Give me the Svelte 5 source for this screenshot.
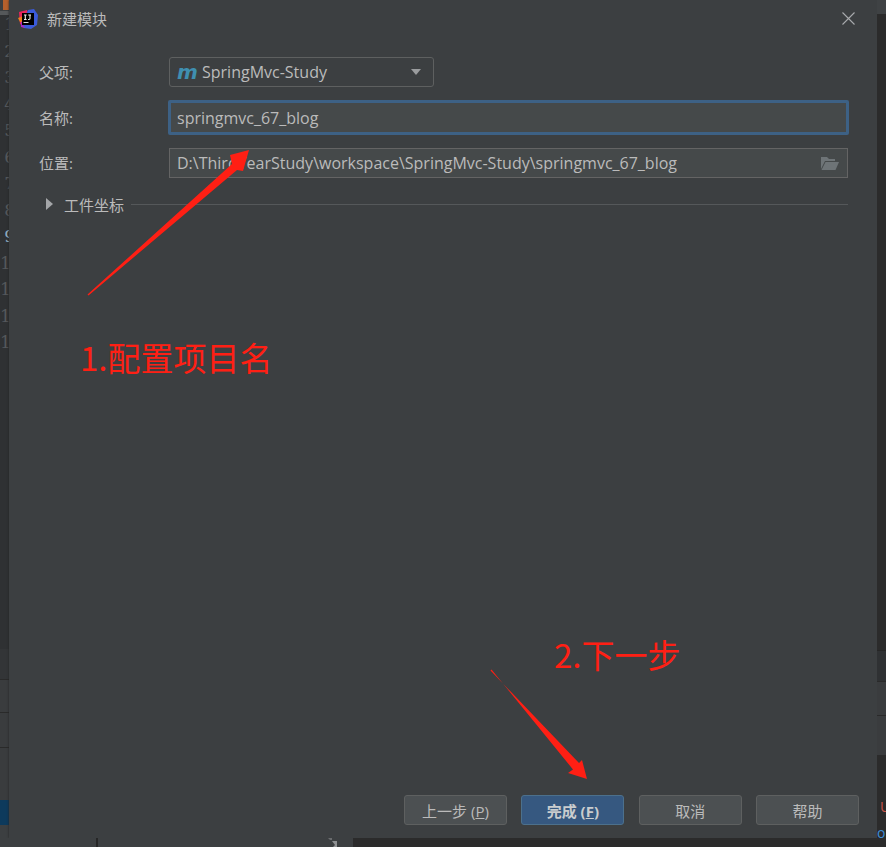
<script lang="ts">
  const lineNumbers = Array.from({ length: 13 }, (_, i) => i + 1);
  const buttons = [
    { label: "上一步", key: "P" },
    { label: "完成", key: "F", primary: true },
    { label: "取消" },
    { label: "帮助" },
  ];
</script>

<div class="screen">
  <div class="main">
    <div class="gutter">
      <div class="tab"><span class="tab-icon"></span></div>
      <div class="numbers">
        {#each lineNumbers as n}
          <div class="num">{n}</div>
        {/each}
      </div>
      <div class="band b1"></div>
      <div class="band b2"></div>
      <div class="band b3"></div>
      <div class="band b4"></div>
      <div class="band b5"></div>
      <div class="band b6"></div>
    </div>

    <section class="dialog">
      <header class="title">
        <svg class="logo" width="20" height="20" viewBox="0 0 20 20">
          <path d="M1 3 L9 1 L11 8 L5 17 L2 15 Z" fill="#e8235f" />
          <path d="M0 9 L5 7 L6 14 L2 13 Z" fill="#f07c1c" />
          <path d="M10 1 L16 0 L20 6 L19 16 L13 20 L6 19 L3 17 Z" fill="#3b5bdb" />
          <path d="M3 12 L7 19 L3 18 Z" fill="#a32bc4" />
          <rect x="4" y="4" width="12" height="12" fill="#000" />
          <rect x="5.5" y="13" width="5" height="1" fill="#ddd" />
          <path d="M6 6 H8.6 M7.3 6 V10.5 M6 10.5 H8.6 M10.2 6 H13 M12 6 V9.6 Q12 10.5 11 10.5 H10" stroke="#eee" stroke-width="1.1" fill="none" />
        </svg>
        <span class="title-text">新建模块</span>
        <svg class="close" width="13" height="13" viewBox="0 0 13 13">
          <path d="M.5 .5 L12.5 12.5 M12.5 .5 L.5 12.5" stroke="#a9abad" stroke-width="1.1" />
        </svg>
      </header>

      <div class="form">
        <label class="label" for="parent">父项:</label>
        <div class="select" id="parent">
          <span class="m">m</span>
          <span class="select-text">SpringMvc-Study</span>
          <span class="caret"></span>
        </div>

        <label class="label" for="name">名称:</label>
        <div class="input focused" id="name">springmvc_67_blog</div>

        <label class="label" for="path">位置:</label>
        <div class="input" id="path">
          <span>D:\ThirdYearStudy\workspace\SpringMvc-Study\springmvc_67_blog</span>
          <svg class="folder" width="19" height="14" viewBox="0 0 19 14">
            <path d="M1 13 V1 H7 L9 3 H15 V5 H5 L1 13 Z" fill="#6e7477" />
            <path d="M5.5 6 H19 L15.5 14 H1.5 Z" fill="#6e7477" />
          </svg>
        </div>
      </div>

      <div class="expander">
        <span class="arrow"></span>
        <span class="exp-text">工件坐标</span>
        <span class="rule"></span>
      </div>

      <footer class="footer">
        {#each buttons as b}
          <button type="button" class="btn" class:primary={b.primary}>
            {b.label}{#if b.key}&nbsp;(<u>{b.key}</u>){/if}
          </button>
        {/each}
      </footer>
    </section>

    <div class="side">
      <div class="side-top"></div>
      <div class="side-dark"></div>
      <div class="side-a"></div>
      <div class="side-b"></div>
      <div class="side-c"></div>
      <div class="side-d"></div>
      <div class="side-text">
        <span class="err">U</span>
        <span class="link">o</span>
      </div>
    </div>
  </div>

  <div class="bottom">
    <div class="bottom-a"></div>
    <div class="bottom-b">
      <svg class="resize" width="10" height="9" viewBox="0 0 10 9">
        <path d="M0 0 L4 0 L4 2 L2 2 Z" fill="#6a6c6e" />
        <path d="M4 3 L9 3 L9 9 L5 9 L7 7 Z" fill="#8f9193" />
      </svg>
    </div>
    <div class="bottom-c"></div>
  </div>

  <svg class="marks" width="886" height="847" viewBox="0 0 886 847">
    <path d="M87.5 294.5 L232 164 L230 155 L249 150 L243 171 L237 170 L88.5 295.5 Z" fill="#ff1f14" />
    <path d="M490.5 670.5 L579 763 L582 760 L587 779 L568 773 L573 769.5 L491.5 669.5 Z" fill="#ff1f14" />
  </svg>
  <div class="note n1">1.配置项目名</div>
  <div class="note n2">2.下一步</div>
</div>

<style>
  :global(body) {
    margin: 0;
    background: #2b2b2b;
  }

  .screen {
    position: relative;
    width: 886px;
    height: 847px;
    overflow: hidden;
    font-family: "Open Sans", "Noto Sans CJK SC", sans-serif;
    font-size: 15px;
    color: #bbbbbb;
  }

  .main {
    display: flex;
    height: 838px;
  }

  .gutter {
    width: 9px;
    flex-shrink: 0;
    display: flex;
    flex-direction: column;
    background: #2f3133;
    overflow: hidden;
  }

  .tab {
    height: 15px;
    flex-shrink: 0;
    background: #3c3f41;
    border-bottom: 4px solid #55585a;
    box-sizing: border-box;
  }

  .tab-icon {
    display: block;
    width: 6px;
    height: 10px;
    margin-left: 3px;
    background: #b5602c;
  }

  .numbers {
    flex: 1;
    margin-top: -4px;
    font-family: "DejaVu Serif", serif;
    font-size: 17px;
    line-height: 26.5px;
    color: #55585b;
  }

  .num {
    width: 16px;
    text-align: right;
    white-space: nowrap;
  }

  .num:nth-child(-n + 9) {
    width: 15px;
  }

  .num:nth-child(9) {
    color: #8fa9bc;
  }

  .band {
    flex-shrink: 0;
    border-bottom: 1px solid #2a2a2a;
    box-sizing: border-box;
  }

  .b1 { height: 31px; background: #333537; }
  .b2 { height: 33px; background: #3a3c3e; }
  .b3 { height: 35px; background: #3a3c3e; }
  .b4 { height: 52px; background: #3a3c3e; border: 0; }
  .b5 { height: 25px; background: #0d3a5c; border: 0; }
  .b6 { height: 13px; background: #3c3f41; border: 0; }

  .dialog {
    width: 868px;
    flex-shrink: 0;
    display: flex;
    flex-direction: column;
    background: #3c3f41;
    box-shadow: 0 0 2px #222;
  }

  .title {
    display: flex;
    align-items: center;
    height: 37px;
    padding: 0 22px 0 9px;
    flex-shrink: 0;
  }

  .logo {
    flex-shrink: 0;
  }

  .title-text {
    margin-left: 9px;
    color: #bbbbbb;
  }

  .close {
    margin-left: auto;
  }

  .form {
    display: grid;
    grid-template-columns: 130px 1fr;
    row-gap: 13px;
    align-items: center;
    margin: 20px 29px 0 30px;
  }

  .label {
    line-height: 30px;
  }

  .select {
    display: flex;
    align-items: center;
    width: 265px;
    height: 30px;
    padding: 0 12px 0 7px;
    box-sizing: border-box;
    background: #3c3f41;
    border: 1px solid #5e6060;
    border-radius: 3px;
    font-size: 16px;
  }

  .m {
    width: 25px;
    font-family: "DejaVu Sans", sans-serif;
    font-weight: 700;
    font-style: italic;
    font-size: 20px;
    line-height: 24px;
    color: #3f8fb0;
  }

  .caret {
    margin-left: auto;
    width: 0;
    height: 0;
    border-left: 5.5px solid transparent;
    border-right: 5.5px solid transparent;
    border-top: 6px solid #9a9c9e;
  }

  .input {
    display: flex;
    align-items: center;
    justify-content: space-between;
    height: 30px;
    padding: 0 7px;
    box-sizing: border-box;
    background: #45494a;
    border: 1px solid #646464;
    font-size: 16px;
  }

  .input.focused {
    margin: 0 -1px;
    height: 35px;
    padding: 0 6px;
    border: 3px solid #3d6185;
    border-radius: 2px;
  }

  .folder {
    margin-right: 1px;
  }

  .expander {
    display: flex;
    align-items: center;
    margin: 16px 29px 0 37px;
    height: 20px;
  }

  .arrow {
    width: 0;
    height: 0;
    border-top: 6px solid transparent;
    border-bottom: 6px solid transparent;
    border-left: 7px solid #a4a6a8;
  }

  .exp-text {
    margin-left: 11px;
  }

  .rule {
    flex: 1;
    height: 1px;
    margin-left: 7px;
    background: #55585a;
  }

  .footer {
    margin-top: auto;
    display: flex;
    justify-content: flex-end;
    gap: 14.33px;
    padding: 0 18px 13px 0;
  }

  .btn {
    width: 103px;
    height: 30px;
    padding: 0;
    border: 1px solid #5e6060;
    border-radius: 3px;
    background: #4c5052;
    color: #bbbbbb;
    font: inherit;
    font-size: 15px;
  }

  .btn.primary {
    background: #365880;
    border-color: #4c708c;
    color: #c9ccce;
    font-weight: 700;
  }

  .side {
    position: relative;
    flex: 1;
    display: flex;
    flex-direction: column;
    overflow: hidden;
    background: #2b2b2b;
  }

  .side-top { height: 14px; background: #3f4244; }
  .side-dark { height: 636px; background: #2b2b2b; border-bottom: 1px solid #262626; }
  .side-a { height: 30px; background: #2f3133; }
  .side-b { height: 33px; background: #3a3c3e; border-top: 1px solid #2a2a2a; }
  .side-c { height: 39px; background: #3a3c3e; border-top: 1px solid #2a2a2a; }
  .side-d { flex: 1; background: #2b2b2b; }

  .side-text {
    position: absolute;
    left: 0;
    top: 794px;
    display: flex;
    flex-direction: column;
    font-size: 14px;
    line-height: 26px;
    white-space: nowrap;
  }

  .err {
    color: #c7544a;
    margin-left: 3px;
  }

  .link {
    color: #3d8ed8;
    text-decoration: underline;
  }

  .bottom {
    display: flex;
    height: 9px;
  }

  .bottom-a {
    width: 96px;
    background: #3c3f41;
    border-right: 2px solid #262626;
  }

  .bottom-b {
    width: 255px;
    background: #3c3f41;
    position: relative;
  }

  .resize {
    position: absolute;
    left: 230px;
    top: 0;
  }

  .bottom-c {
    flex: 1;
    background: #2b2b2b;
  }

  .marks {
    position: absolute;
    left: 0;
    top: 0;
    pointer-events: none;
  }

  .note {
    position: absolute;
    font-family: "Noto Sans CJK SC", sans-serif;
    font-size: 33px;
    line-height: 40px;
    color: #ff1f14;
    white-space: nowrap;
  }

  .n1 {
    left: 80px;
    top: 337px;
  }

  .n2 {
    left: 554px;
    top: 634px;
  }
</style>
